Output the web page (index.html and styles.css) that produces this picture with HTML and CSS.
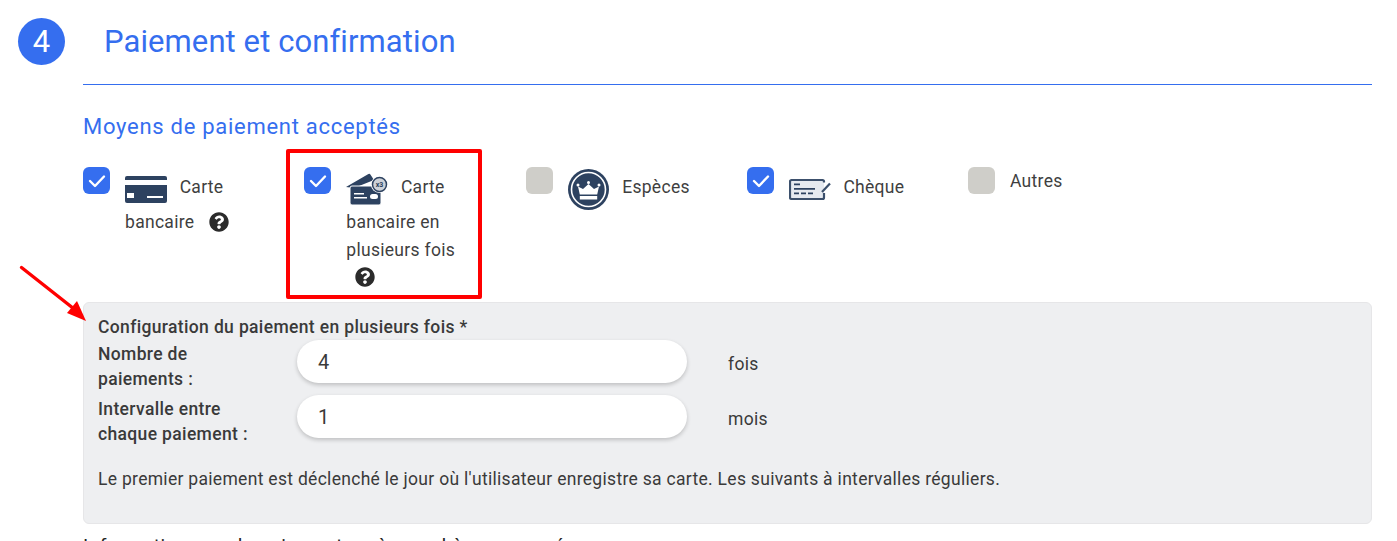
FILE: index.html
```html
<!DOCTYPE html>
<html lang="fr">
<head>
  <meta charset="UTF-8">
  <title>Paiement et confirmation</title>
  <link rel="stylesheet" href="styles.css">
</head>
<body>

  <div class="step-head">
    <span class="step-num">4</span>
    <h2>Paiement et confirmation</h2>
  </div>

  <div class="content">
    <h3>Moyens de paiement acceptés</h3>

    <div class="methods">
      <div class="method m-card">
        <span class="check on"><svg viewBox="0 0 27 27"><path d="M7 14l5 5 9-9.500"/></svg></span>
        <div class="method-label">
          <svg class="pay-icon" viewBox="0 0 42 27"><rect class="ink" width="42" height="27" rx="2"/><path class="cut" d="M0 4h42v5H0zM2 17h7v5H2zM22 20h16v2H22z"/></svg>
          Carte bancaire
          <svg class="help" viewBox="0 0 512 512"><path d="M504 256c0 137-111 248-248 248S8 393 8 256 119 8 256 8s248 111 248 248zM263 90c-54 0-89 23-116 63-4 5-3 12 3 16l35 26c5 4 13 3 17-2 18-22 30-35 57-35 20 0 45 13 45 33 0 15-12 22-32 33-23 13-54 30-54 71v4c0 7 5 12 12 12h56c7 0 12-5 12-12v-2c0-29 84-30 84-107 0-58-60-100-119-100zm-7 249c-26 0-47 21-47 47s21 47 47 47 47-21 47-47-21-47-47-47z"/></svg>
        </div>
      </div>

      <div class="method m-multi">
        <span class="check on"><svg viewBox="0 0 27 27"><path d="M7 14l5 5 9-9.500"/></svg></span>
        <div class="method-label">
          <svg class="pay-icon multi" viewBox="0 0 42 32"><path class="ink" d="M0 14L22 1.200a2 2 0 0 1 2.700.7L28 7 8 15z"/><rect class="ink" x="4" y="13" width="31" height="19" rx="2" stroke="#fff" stroke-width="1"/><path class="cut" d="M8 20h10v1.600H8zM8 24h13v1.600H8z"/><rect class="cut" x="24" y="21" width="8" height="5" rx="2.500"/><circle cx="33.500" cy="11.500" r="8.500" fill="#fff"/><circle cx="33.500" cy="11.500" r="7" fill="#cdd1d7" stroke="#2d4260" stroke-width="1.500"/><text class="badge-x" x="33.500" y="14" text-anchor="middle">x3</text></svg>
          Carte bancaire en plusieurs fois
          <svg class="help help-wrap" viewBox="0 0 512 512"><path d="M504 256c0 137-111 248-248 248S8 393 8 256 119 8 256 8s248 111 248 248zM263 90c-54 0-89 23-116 63-4 5-3 12 3 16l35 26c5 4 13 3 17-2 18-22 30-35 57-35 20 0 45 13 45 33 0 15-12 22-32 33-23 13-54 30-54 71v4c0 7 5 12 12 12h56c7 0 12-5 12-12v-2c0-29 84-30 84-107 0-58-60-100-119-100zm-7 249c-26 0-47 21-47 47s21 47 47 47 47-21 47-47-21-47-47-47z"/></svg>
        </div>
        <span class="highlight"></span>
      </div>

      <div class="method m-cash">
        <span class="check"></span>
        <div class="method-label">
          <svg class="pay-icon round" viewBox="0 0 41 41"><circle class="ink" cx="20.500" cy="20.500" r="20.500"/><circle cx="20.500" cy="20.500" r="17" fill="none" stroke="#fff" stroke-width="1.600"/><path class="cut" d="M10 17.500l5 2.500 5.500-5 5.500 5 5-2.500-1.800 8H11.800zM11.800 27h17.400v3.500H11.800z"/><circle class="cut" cx="10" cy="16" r="1.500"/><circle class="cut" cx="20.500" cy="13.500" r="1.500"/><circle class="cut" cx="31" cy="16" r="1.500"/></svg>
          Espèces
        </div>
      </div>

      <div class="method m-cheque">
        <span class="check on"><svg viewBox="0 0 27 27"><path d="M7 14l5 5 9-9.500"/></svg></span>
        <div class="method-label">
          <svg class="pay-icon" viewBox="0 0 42 27"><path d="M35 6.500V5.500a1.500 1.500 0 0 0-1.500-1.500h-31A1.500 1.500 0 0 0 1 5.500v16A1.500 1.500 0 0 0 2.500 23h31a1.500 1.500 0 0 0 1.500-1.500V17" fill="#e6eaf0" stroke="#3c506c" stroke-width="2.200"/><path class="ink" d="M5 7.500h6v1.800H5zM5 12h21v1.800H5zM5 16.500h5v1.800H5zM12 16.500h5v1.800h-5zM19 16.500h5v1.800h-5z"/><path class="pen" d="M33 16l8-8.500"/></svg>
          Chèque
        </div>
      </div>

      <div class="method m-other">
        <span class="check"></span>
        <div class="method-label">Autres</div>
      </div>
    </div>

    <div class="config">
      <div class="config-title">Configuration du paiement en plusieurs fois *</div>
      <div class="config-row">
        <label>Nombre de paiements :</label>
        <div class="field">4</div>
        <span class="unit">fois</span>
      </div>
      <div class="config-row">
        <label>Intervalle entre chaque paiement :</label>
        <div class="field">1</div>
        <span class="unit">mois</span>
      </div>
      <p>Le premier paiement est déclenché le jour où l'utilisateur enregistre sa carte. Les suivants à intervalles réguliers.</p>
    </div>

    <div class="next-title">Informations sur le paiement après un chèque envoyé</div>
  </div>

  <svg class="arrow" viewBox="0 0 70 60"><path d="M2.500 2.500l52 41" stroke="#f00" stroke-width="3.400" stroke-linecap="round"/><path d="M67 56l-19-8 10-12z" fill="#f00"/></svg>

</body>
</html>
```

FILE: styles.css
```css
* {
  box-sizing: border-box;
}

html, body {
  margin: 0;
  padding: 0;
  height: 541px;
  overflow: hidden;
  background: #fff;
  font-family: Roboto, sans-serif;
  color: #3a3a3a;
}

body {
  position: relative;
}

.step-head {
  display: flex;
  align-items: center;
  padding: 18px 0 0 18px;
  height: 65px;
}

.step-num {
  width: 47px;
  height: 47px;
  border-radius: 50%;
  background: #356eef;
  color: #fff;
  font-size: 31px;
  line-height: 47px;
  text-align: center;
}

h2 {
  margin: 0 0 0 39px;
  font-size: 31px;
  font-weight: 400;
  letter-spacing: 0.09px;
  color: #356eef;
}

.content {
  margin: 19px 25px 0 83px;
  border-top: 1px solid #356eef;
}

h3 {
  margin: 28px 0 0 0;
  font-size: 22px;
  line-height: 27px;
  font-weight: 400;
  color: #356eef;
  letter-spacing: 0.72px;
}

.methods {
  display: flex;
  height: 162px;
  padding-top: 27px;
}

.method {
  display: flex;
  position: relative;
  width: 221.25px;
}

.check {
  flex-shrink: 0;
  width: 27px;
  height: 27px;
  border-radius: 6px;
  background: #cfcec9;
}

.check.on {
  background: #356eef;
}

.check svg {
  display: block;
  width: 27px;
  height: 27px;
  fill: none;
  stroke: #fff;
  stroke-width: 2.4;
  stroke-linecap: round;
  stroke-linejoin: round;
}

.method-label {
  margin: 6px 0 0 15px;
  width: 118px;
  font-size: 17.5px;
  letter-spacing: 0.3px;
  line-height: 28px;
  color: #3f3f3f;
}

.pay-icon {
  width: 42px;
  height: 27px;
  margin: 0 8px 5px 0;
  vertical-align: -15px;
}

.pay-icon.multi {
  height: 32px;
  margin-bottom: 3px;
}

.pay-icon.round {
  width: 41px;
  height: 41px;
  margin: -5px 9px 5px 0;
  vertical-align: -22px;
}

.m-cheque .method-label,
.m-cash .method-label {
  width: auto;
}

.ink {
  fill: #2d4260;
}

.cut {
  fill: #fff;
}

.pen {
  fill: none;
  stroke: #3c506c;
  stroke-width: 2.2;
}

.badge-x {
  font-size: 7px;
  font-weight: 700;
  letter-spacing: 0;
  fill: #2d4260;
}

.help {
  width: 20px;
  height: 20px;
  margin-left: 10px;
  vertical-align: -4px;
  fill: #2b2b2b;
}

.help-wrap {
  display: block;
  margin: 3px 0 0 9px;
}

.highlight {
  position: absolute;
  left: -18px;
  top: -18px;
  width: 196px;
  height: 150px;
  border: 4px solid #f00;
  border-radius: 2px;
}

.m-other .method-label {
  margin-top: 0;
}

.config {
  height: 222px;
  padding: 14px 14px 0 14px;
  background: #eeeff1;
  border: 1px solid #e6e6e8;
  border-radius: 6px;
  font-size: 17.5px;
  letter-spacing: 0.3px;
}

.config-title {
  font-weight: 500;
  line-height: 21px;
  letter-spacing: 0.35px;
}

.config-row {
  display: flex;
  align-items: flex-start;
  height: 55px;
}

label {
  flex-shrink: 0;
  width: 199px;
  margin-top: 3.5px;
  padding-right: 30px;
  font-weight: 500;
  line-height: 25px;
  letter-spacing: 0.35px;
}

.field {
  width: 390px;
  height: 43px;
  margin-top: 2px;
  padding-left: 21px;
  border-radius: 22px;
  background: #fff;
  box-shadow: 0 2px 4px rgba(0, 0, 0, 0.2);
  font-size: 20px;
  letter-spacing: 0;
  line-height: 44px;
}

.unit {
  margin: 14px 0 0 41px;
  line-height: 24px;
}

.config p {
  margin: 19px 0 0 0;
  line-height: 24px;
}

.next-title {
  margin-top: 10px;
  font-size: 19px;
  letter-spacing: 0.6px;
  color: #222;
}

.arrow {
  position: absolute;
  left: 19px;
  top: 265px;
  width: 70px;
  height: 60px;
}
```
